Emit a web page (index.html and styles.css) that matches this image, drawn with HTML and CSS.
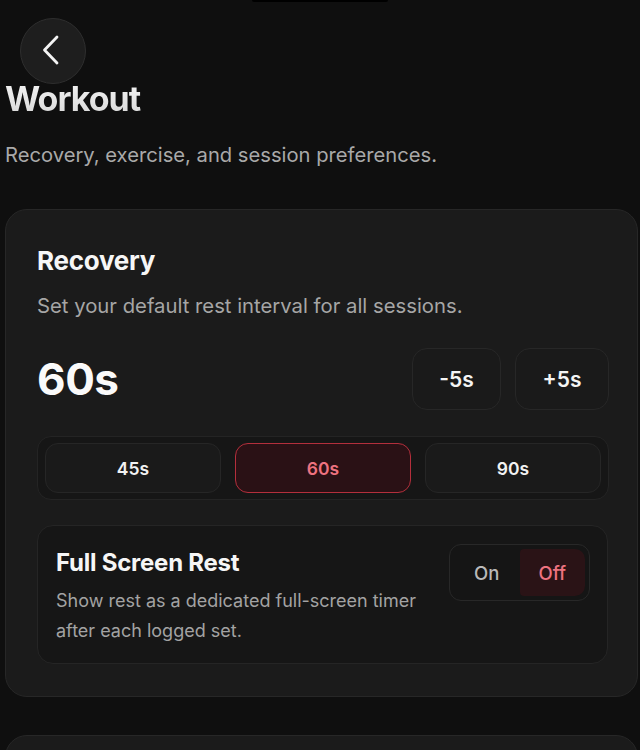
FILE: index.html
```html
<!DOCTYPE html>
<html lang="en">
<head>
<meta charset="utf-8">
<title>Workout</title>
<link rel="stylesheet" href="styles.css">
</head>
<body>
<div class="notch"></div>
<main class="page">
  <button class="back" aria-label="Back">
    <svg width="20" height="32" viewBox="0 0 20 32" fill="none" stroke="#f4f4f4" stroke-width="2.8" stroke-linecap="round" stroke-linejoin="round"><path d="M16 3 L3.5 16 L16 29"/></svg>
  </button>
  <h1 class="title">Workout</h1>
  <p class="subtitle">Recovery, exercise, and session preferences.</p>

  <section class="card">
    <h2 class="card-title">Recovery</h2>
    <p class="card-desc">Set your default rest interval for all sessions.</p>

    <div class="rest-row">
      <div class="rest-value">60s</div>
      <div class="steppers">
        <button class="step step-minus">-5s</button>
        <button class="step step-plus">+5s</button>
      </div>
    </div>

    <div class="presets">
      <button class="preset">45s</button>
      <button class="preset active">60s</button>
      <button class="preset">90s</button>
    </div>

    <div class="option">
      <div class="option-text">
        <h3 class="option-title">Full Screen Rest</h3>
        <p class="option-desc">Show rest as a dedicated full-screen timer after each logged set.</p>
      </div>
      <div class="toggle">
        <span class="toggle-item">On</span>
        <span class="toggle-item selected">Off</span>
      </div>
    </div>
  </section>

  <section class="card card-next"></section>
</main>
</body>
</html>
```

FILE: styles.css
```css
* { box-sizing: border-box; }

html, body {
  margin: 0;
  background: #0f0f0f;
  color: #f4f4f4;
  font-family: Inter, "Noto Sans", sans-serif;
}

body { position: relative; overflow: hidden; height: 750px; }

.notch {
  position: absolute;
  top: 0;
  left: 252px;
  width: 136px;
  height: 2px;
  background: #000;
  border-radius: 0 0 2px 2px;
}

.page {
  padding: 18px 2px 0 5px;
}

button {
  font-family: inherit;
  color: inherit;
  cursor: pointer;
}

.back {
  margin-left: 15px;
  width: 66px;
  height: 66px;
  border-radius: 50%;
  background: #1e1e1e;
  border: 1px solid #2e2e2e;
  display: flex;
  align-items: center;
  justify-content: center;
  padding: 0 4px 2px 0;
}

.title {
  margin: -5px 0 0;
  font-size: 34px;
  line-height: 40px;
  font-weight: 700;
  letter-spacing: -0.03em;
  background: linear-gradient(180deg, #f5f5f5 0%, #d6d6d6 100%);
  -webkit-background-clip: text;
  background-clip: text;
  color: transparent;
}

.subtitle {
  margin: 24px 0 0;
  font-size: 20.2px;
  line-height: 24px;
  color: #a9a9a9;
}

.card {
  margin-top: 42px;
  background: #1b1b1b;
  border: 1px solid #272727;
  border-radius: 22px;
  padding: 35px 30px 32px 31px;
}

.card-title {
  margin: 0;
  font-size: 26px;
  line-height: 32px;
  font-weight: 650;
  letter-spacing: -0.01em;
  color: #f6f6f6;
}

.card-desc {
  margin: 17px 0 0;
  font-size: 20.3px;
  line-height: 24px;
  color: #a6a6a6;
}

.rest-row {
  margin-top: 30px;
  display: flex;
  align-items: center;
  justify-content: space-between;
}

.rest-value {
  font-size: 44px;
  line-height: 52px;
  font-weight: 700;
  letter-spacing: -0.01em;
  color: #fafafa;
}

.steppers {
  display: flex;
  gap: 14px;
  margin-right: -2px;
}

.step {
  height: 62px;
  border-radius: 15px;
  background: #1a1a1a;
  border: 1px solid #272727;
  font-size: 21px;
  font-weight: 600;
  color: #f4f4f4;
}

.step-minus { width: 89px; }
.step-plus { width: 94px; }

.presets {
  margin: 26px -2px 0 0;
  display: flex;
  gap: 14px;
  padding: 6px 7px;
  background: #161616;
  border: 1px solid #242424;
  border-radius: 14px;
}

.preset {
  flex: 1;
  height: 50px;
  border-radius: 13px;
  background: #1a1a1a;
  border: 1px solid #262626;
  font-size: 17.5px;
  font-weight: 600;
  color: #f2f2f2;
}

.preset.active {
  background: #2a1115;
  border: 1.5px solid #b42f3c;
  color: #ee7380;
}

.option {
  margin: 25px -1px 0 0;
  display: flex;
  justify-content: space-between;
  align-items: flex-start;
  padding: 18px 17px 17px 18px;
  background: #161616;
  border: 1px solid #252525;
  border-radius: 16px;
}

.option-text { max-width: 380px; }

.option-title {
  margin: 4px 0 0;
  font-size: 24px;
  line-height: 30px;
  font-weight: 700;
  letter-spacing: -0.01em;
  color: #f6f6f6;
}

.option-desc {
  margin: 8px 0 0;
  font-size: 18px;
  line-height: 30px;
  color: #a3a3a3;
}

.toggle {
  display: flex;
  padding: 4px;
  width: 141px;
  height: 57px;
  background: #151515;
  border: 1px solid #282828;
  border-radius: 12px;
}

.toggle-item {
  flex: 1;
  display: flex;
  align-items: center;
  justify-content: center;
  font-size: 18.5px;
  font-weight: 500;
  color: #b9b9b9;
  border-radius: 6px;
}

.toggle-item.selected {
  background: #2a1316;
  color: #ee7380;
  border-radius: 4px 10px 10px 4px;
}

.card-next {
  margin-top: 38px;
  height: 80px;
  padding: 0;
}
```
